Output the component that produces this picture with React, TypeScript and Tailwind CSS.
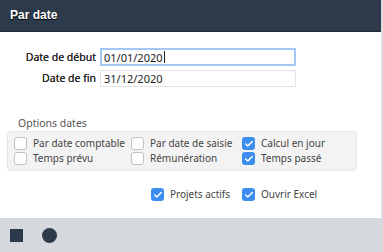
import { Check } from "lucide-react";

function Box({ checked, label }: { checked?: boolean; label: string }) {
  return (
    <label className="flex items-center gap-[6px] whitespace-nowrap text-[10px] leading-[13px]">
      {checked ? (
        <span className="flex h-[13px] w-[13px] shrink-0 items-center justify-center rounded-[3px] bg-[#3b8df0]">
          <Check className="h-[10px] w-[10px] text-white" strokeWidth={3.5} />
        </span>
      ) : (
        <span className="h-[13px] w-[13px] shrink-0 rounded-[3px] border border-[#c2c2c2] bg-white" />
      )}
      <span>{label}</span>
    </label>
  );
}

export default function App() {
  return (
    <div
      className="flex h-[252px] w-[383px] flex-col bg-white text-[11px] leading-[13px] text-[#333]"
      style={{ fontFamily: '"Noto Sans", "Open Sans", sans-serif' }}
    >
      <div className="flex flex-1 flex-col border-r-2 border-[#dcdcdc]">
        <div className="flex h-[32px] shrink-0 items-center border-b border-[#1f2a36] bg-[#2c3a4b] px-[10px]">
          <span
            className="text-[12px] font-bold text-white [text-shadow:0_1px_1px_#000]"
            style={{ fontFamily: '"Liberation Sans", Arial, sans-serif' }}
          >
            Par date
          </span>
        </div>

        <div className="grid grid-cols-[96px_196px] items-center gap-x-[4px] gap-y-[4px] pt-[16px]">
          <span className="text-right text-[10.5px] text-[#2a2a2a] [text-shadow:0_0_0.5px_#2a2a2a]">Date de début</span>
          <div className="flex h-[18px] items-center border-2 border-[#a4c8f4] px-[2px] text-[#222]">
            01/01/2020<span className="ml-[1px] h-[12px] w-px bg-[#222]" />
          </div>
          <span className="text-right text-[10.5px] text-[#2a2a2a] [text-shadow:0_0_0.5px_#2a2a2a]">Date de fin</span>
          <div className="flex h-[17px] items-center border border-[#e2e2e2] px-[3px] text-[#222]">
            31/12/2020
          </div>
        </div>

        <div className="mt-[30px] pl-[18px] text-[10.5px] text-[#555]">Options dates</div>
        <div className="ml-[7px] mt-[1px] w-[350px] rounded-[4px] border border-[#e6e6e6] bg-[#f3f3f3] py-[5px] pl-[6px] text-[#444]">
          <div className="grid grid-cols-[117px_111px_auto] gap-y-[2px]">
            <Box label="Par date comptable" />
            <Box label="Par date de saisie" />
            <Box checked label="Calcul en jour" />
            <Box label="Temps prévu" />
            <Box label="Rémunération" />
            <Box checked label="Temps passé" />
          </div>
        </div>

        <div className="mt-[17px] grid grid-cols-[91px_auto] pl-[151px] text-[#444]">
          <Box checked label="Projets actifs" />
          <Box checked label="Ouvrir Excel" />
        </div>
      </div>

      <div className="flex h-[34px] shrink-0 items-center gap-[19px] bg-[#d5d8dc] px-[10px]">
        <span className="h-[13px] w-[13px] bg-[#2c3a4b]" />
        <span className="h-[15px] w-[15px] rounded-full bg-[#2c3a4b]" />
      </div>
    </div>
  );
}
